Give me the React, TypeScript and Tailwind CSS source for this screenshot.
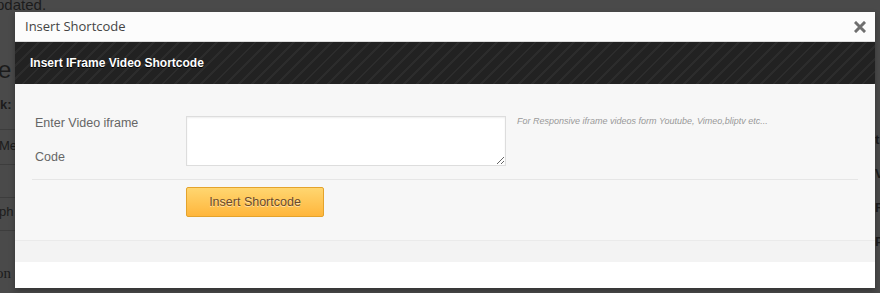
import { useState } from "react";

const BackdropPage = () => {
  return (
    <div className="w-[880px] h-[293px] bg-[#4a4a4a] text-[#1c1c1c] font-['Liberation_Sans',Arial,sans-serif] overflow-hidden flex">
      <div className="w-[15px] shrink-0 flex flex-col">
        <p className="-ml-[4px] -mt-[3px] text-[15px] leading-[16px] whitespace-nowrap">pdated.</p>
        <p className="mt-[44px] -ml-[2px] text-[24px] leading-[26px] whitespace-nowrap">e p</p>
        <p className="mt-[14px] -ml-[8px] text-[13px] leading-[16px] font-bold whitespace-nowrap">nk:</p>
        <div className="mt-[16px] h-px bg-[#3d3d3d]" />
        <p className="mt-[8px] -ml-[1px] text-[13px] leading-[16px] whitespace-nowrap">Me</p>
        <div className="mt-[10px] h-px bg-[#3d3d3d]" />
        <div className="mt-[32px] h-px bg-[#3d3d3d]" />
        <p className="mt-[6px] -ml-[1px] text-[13px] leading-[16px] whitespace-nowrap">ph</p>
        <div className="mt-[10px] h-px bg-[#3d3d3d]" />
        <p className="mt-[34px] -ml-[4px] text-[15px] leading-[16px] whitespace-nowrap font-['Liberation_Serif',serif]">on</p>
      </div>
      <div className="flex-1" />
      <div className="w-[5px] shrink-0 flex flex-col pt-[132px] gap-[18px] text-[13px] leading-[16px] font-bold">
        <p className="whitespace-nowrap">t</p>
        <p className="whitespace-nowrap">Vi</p>
        <p className="whitespace-nowrap">Re</p>
        <p className="whitespace-nowrap">Pu</p>
      </div>
    </div>
  );
};

const CloseIcon = () => (
  <svg width="12" height="12" viewBox="0 0 12 12" className="text-[#6f6f6f]">
    <path d="M2 2 L10 10 M10 2 L2 10" stroke="currentColor" strokeWidth="3" strokeLinecap="square" />
  </svg>
);

export default function App() {
  const [code, setCode] = useState("");

  return (
    <div className="relative w-[880px] h-[293px]">
      <BackdropPage />

      <div className="absolute left-[15px] top-[12px] w-[860px] h-[276px] bg-white flex flex-col shadow-[0_3px_6px_rgba(0,0,0,0.3)] font-['Liberation_Sans',Arial,sans-serif]">
        <header className="h-[30px] shrink-0 flex items-center justify-between pl-[10px] pr-[9px] border-b border-[#dcdcdc] bg-[#fcfcfc]">
          <h1 className="font-['Open_Sans',sans-serif] text-[13px] text-[#444]">Insert Shortcode</h1>
          <button aria-label="Close" className="flex items-center">
            <CloseIcon />
          </button>
        </header>

        <div className="h-[42px] shrink-0 flex items-center pl-[15px] bg-[#222] bg-[repeating-linear-gradient(135deg,#222222_0px,#222222_7px,#2c2c2c_7px,#2c2c2c_9px)]">
          <h2 className="text-[12px] font-bold text-white [text-shadow:0_1px_0_#000]">
            Insert IFrame Video Shortcode
          </h2>
        </div>

        <section className="h-[156px] shrink-0 bg-[#f7f7f7] flex flex-col pt-[22px]">
          <div className="h-[60px] flex items-start pl-[20px]">
            <label className="w-[151px] shrink-0 text-[12.5px] leading-[34px] text-[#666]">
              Enter Video iframe
              <br />
              Code
            </label>
            <textarea
              value={code}
              onChange={(e) => setCode(e.target.value)}
              className="block mt-[10px] w-[320px] h-[50px] bg-white border border-[#dddddd] shadow-[inset_0_1px_2px_rgba(0,0,0,0.07)] outline-none text-[12px] p-1"
            />
            <p className="mt-[9px] ml-[11px] text-[9px] leading-[12px] italic text-[#999]">
              For Responsive iframe videos form Youtube, Vimeo,bliptv etc...
            </p>
          </div>
          <div className="mx-[17px] mt-[13px] h-px bg-[#e6e6e6]" />
          <div className="pl-[171px] pt-[7px]">
            <button className="w-[138px] h-[30px] rounded-[2px] border border-[#e4a32c] bg-[linear-gradient(#ffd670,#ffb63c)] text-[12.5px] text-[#6a4a2c] [text-shadow:0_1px_0_rgba(255,255,255,0.5)]">
              Insert Shortcode
            </button>
          </div>
        </section>

        <footer className="h-[22px] shrink-0 bg-[#f3f3f3] border-t border-[#eaeaea]" />
        <div className="flex-1 bg-white" />
      </div>
    </div>
  );
}
